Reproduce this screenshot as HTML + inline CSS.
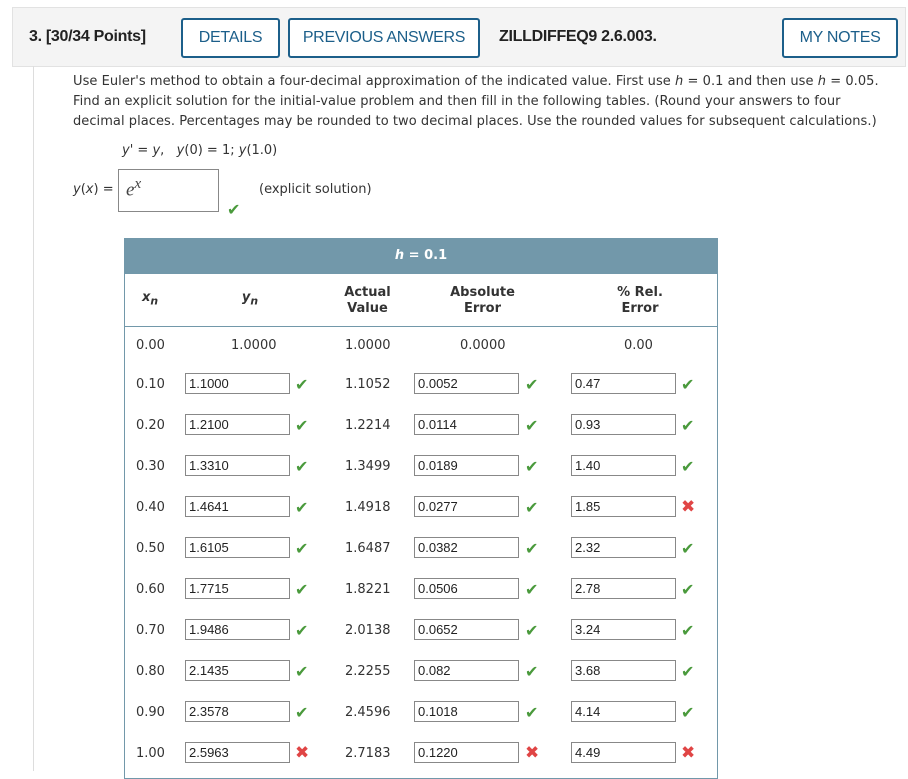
<!DOCTYPE html>
<html><head><style>
body{margin:0;background:#fff;width:908px;height:771px;overflow:hidden;position:relative;font-family:"DejaVu Sans",Verdana,sans-serif;color:#333;}
.hdr{position:absolute;left:12px;top:7px;width:892px;height:58px;background:#f4f4f4;border:1px solid #e2e2e2;}
.a{position:absolute;}
.btn{position:absolute;top:10px;border:2px solid #1c5f8a;border-radius:3px;background:#fff;color:#1c5f8a;font:16px "Liberation Sans",sans-serif;line-height:36px;text-align:center;box-sizing:border-box;height:40px;letter-spacing:-0.3px;}
.ht{position:absolute;top:20px;font:bold 16px "Liberation Sans",sans-serif;color:#222;letter-spacing:-0.3px;}
.vl{position:absolute;left:33px;top:66px;width:1px;height:705px;background:#ddd;}
.p{position:absolute;left:73px;font-size:13px;line-height:20px;color:#333;letter-spacing:0.05px;}
.tb{position:absolute;left:124px;top:238px;width:592px;height:540px;border:1px solid #7298aa;border-top:none;}
.band{position:absolute;left:124px;top:238px;width:594px;height:36px;background:#7298aa;color:#fff;font-weight:bold;font-size:13px;text-align:center;line-height:36px;}
.th{position:absolute;font-weight:bold;font-size:13px;text-align:center;line-height:16px;color:#333;}
.c{position:absolute;font-size:13px;color:#333;}
.in{position:absolute;width:105px;height:21px;border:1px solid #888;box-sizing:border-box;font:13px "Liberation Sans",Arial,sans-serif;padding-left:3px;line-height:19px;color:#222;background:#fff;}
.ok{position:absolute;color:#4a9a3c;font-size:16px;font-weight:bold;}
.x{position:absolute;color:#e04545;font-size:17px;font-weight:bold;}
</style></head><body>
<div class="hdr">
<div class="ht" style="left:16px">3. [30/34 Points]</div>
<div class="btn" style="left:168px;width:99px">DETAILS</div>
<div class="btn" style="left:275px;width:192px">PREVIOUS ANSWERS</div>
<div class="ht" style="left:486px">ZILLDIFFEQ9 2.6.003.</div>
<div class="btn" style="left:769px;width:116px">MY NOTES</div>
</div>
<div class="vl"></div>
<div class="p" style="top:72px">Use Euler's method to obtain a four-decimal approximation of the indicated value. First use <i>h</i> = 0.1 and then use <i>h</i> = 0.05.<br>Find an explicit solution for the initial-value problem and then fill in the following tables. (Round your answers to four<br>decimal places. Percentages may be rounded to two decimal places. Use the rounded values for subsequent calculations.)</div>
<div class="c" style="left:122px;top:143px"><i>y</i>' = <i>y</i>, &nbsp;&nbsp;<i>y</i>(0) = 1; <i>y</i>(1.0)</div>
<div class="c" style="left:73px;top:182px"><i>y</i>(<i>x</i>) =</div>
<div class="a" style="left:118px;top:169px;width:101px;height:43px;border:1px solid #888;box-sizing:border-box;"><span style="position:absolute;left:7px;top:6px;font:italic 19px 'Liberation Serif',serif;color:#444">e<sup style="font-size:15px">x</sup></span></div>
<div class="ok" style="left:227px;top:200px">✔</div>
<div class="c" style="left:259px;top:182px">(explicit solution)</div>
<div class="tb"></div>
<div class="band"><i>h</i> = 0.1</div>
<div class="th" style="left:130px;width:40px;top:290px"><i>x<sub>n</sub></i></div>
<div class="th" style="left:230px;width:40px;top:290px"><i>y<sub>n</sub></i></div>
<div class="th" style="left:330px;width:75px;top:285px">Actual<br>Value</div>
<div class="th" style="left:440px;width:85px;top:285px">Absolute<br>Error</div>
<div class="th" style="left:600px;width:80px;top:285px">% Rel.<br>Error</div>
<div class="a" style="left:125px;top:326px;width:592px;height:1px;background:#7298aa"></div>
<div class="c" style="left:136px;top:338px">0.00</div>
<div class="c" style="left:231px;top:338px">1.0000</div>
<div class="c" style="left:345px;top:338px">1.0000</div>
<div class="c" style="left:460px;top:338px">0.0000</div>
<div class="c" style="left:624px;top:338px">0.00</div>
<div id="rows"></div>
<script>
var d=[["0.10","1.1000",1,"1.1052","0.0052",1,"0.47",1],["0.20","1.2100",1,"1.2214","0.0114",1,"0.93",1],["0.30","1.3310",1,"1.3499","0.0189",1,"1.40",1],["0.40","1.4641",1,"1.4918","0.0277",1,"1.85",0],["0.50","1.6105",1,"1.6487","0.0382",1,"2.32",1],["0.60","1.7715",1,"1.8221","0.0506",1,"2.78",1],["0.70","1.9486",1,"2.0138","0.0652",1,"3.24",1],["0.80","2.1435",1,"2.2255","0.082",1,"3.68",1],["0.90","2.3578",1,"2.4596","0.1018",1,"4.14",1],["1.00","2.5963",0,"2.7183","0.1220",0,"4.49",0]];
var h="";
function m(ok,x,y){return ok?'<div class="ok" style="left:'+x+'px;top:'+(y-10)+'px">✔</div>':'<div class="x" style="left:'+x+'px;top:'+(y-11)+'px">✖</div>';}
d.forEach(function(r,i){var y=383+i*41;
h+='<div class="c" style="left:136px;top:'+(y-6)+'px">'+r[0]+'</div>';
h+='<div class="in" style="left:185px;top:'+(y-10)+'px">'+r[1]+'</div>'+m(r[2],295,y+2);
h+='<div class="c" style="left:345px;top:'+(y-6)+'px">'+r[3]+'</div>';
h+='<div class="in" style="left:414px;top:'+(y-10)+'px">'+r[4]+'</div>'+m(r[5],525,y+2);
h+='<div class="in" style="left:571px;top:'+(y-10)+'px">'+r[6]+'</div>'+m(r[7],681,y+2);
});
document.getElementById("rows").innerHTML=h;
</script>
</body></html>
